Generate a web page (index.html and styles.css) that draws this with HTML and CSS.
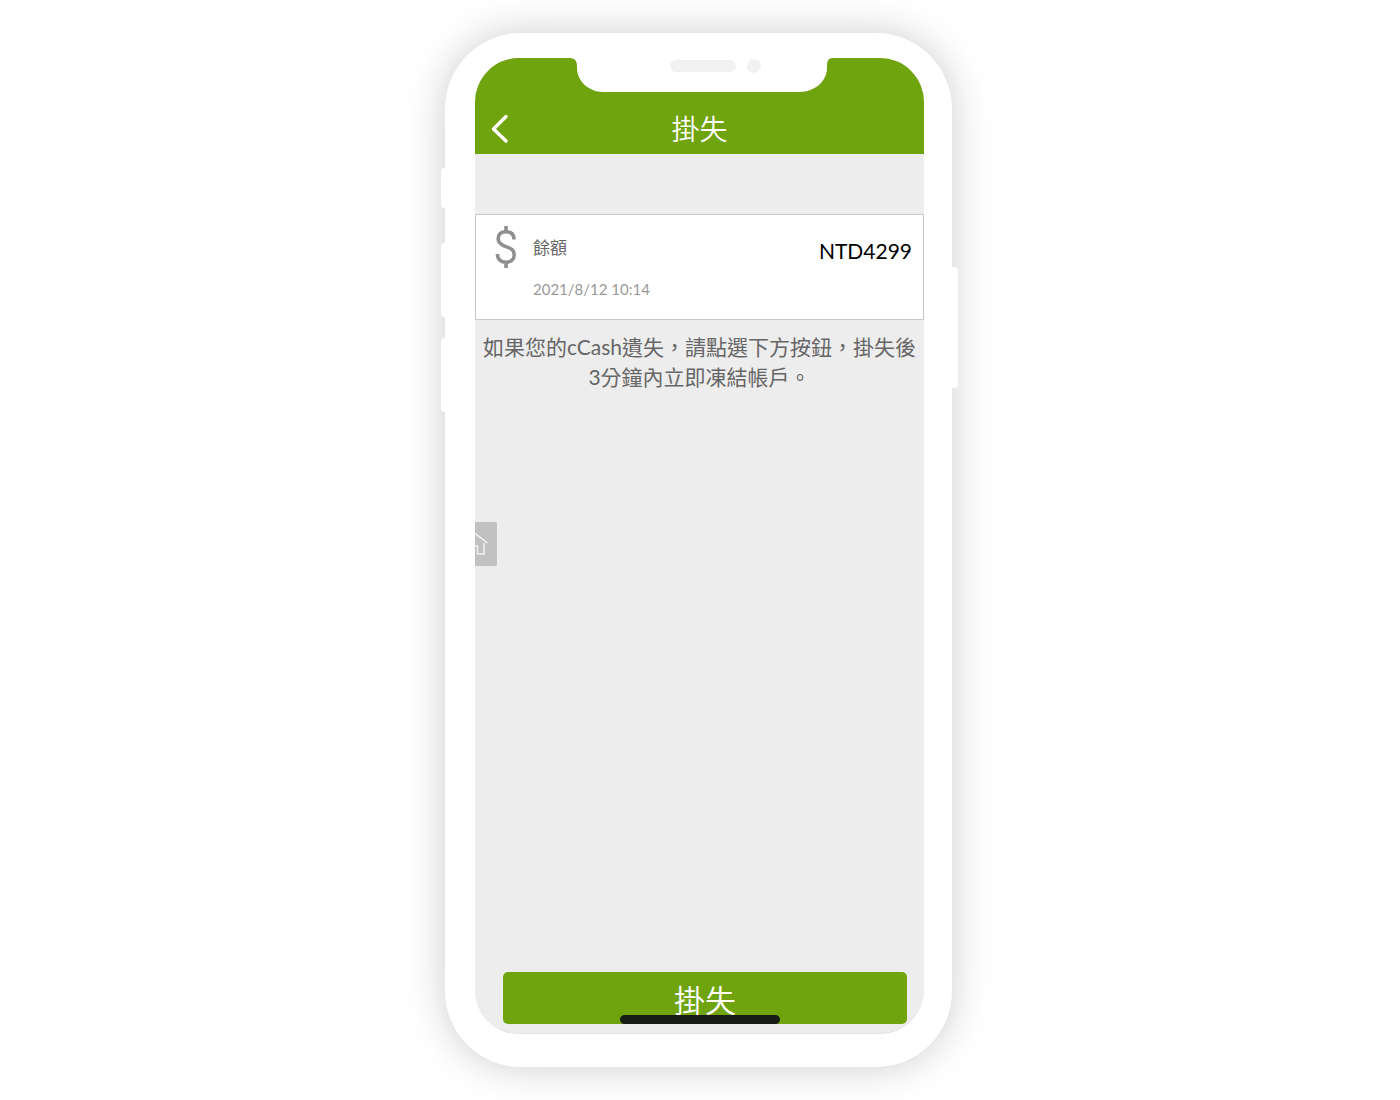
FILE: index.html
```
<!DOCTYPE html>
<html lang="zh-Hant">
<head>
<meta charset="utf-8">
<meta name="viewport" content="width=device-width, initial-scale=1">
<title>掛失</title>
<link rel="stylesheet" href="styles.css">
</head>
<body>
<main class="stage">
  <div class="phone">
    <span class="key key-mute"></span>
    <span class="key key-up"></span>
    <span class="key key-down"></span>
    <span class="key key-power"></span>
    <div class="screen">
      <header class="topbar">
        <button class="back" type="button" aria-label="返回">
          <svg width="18" height="30" viewBox="0 0 18 30" fill="none" stroke="#fff" stroke-width="3.500" stroke-linecap="round" stroke-linejoin="round"><path d="M15 2.500 2.500 15 15 27"/></svg>
        </button>
        <h1 class="title">掛失</h1>
      </header>
      <section class="balance">
        <svg class="dollar" width="22" height="44" viewBox="0 0 22 44" fill="none" stroke="#8f8f8f" stroke-width="3.600"><path d="M11 1v6M11 37v6M19 14.500C19 9.500 16 6.800 11 6.800S3.200 9.300 3.200 14c0 4.200 3 5.900 7.800 7.600 5.500 1.800 8.200 3.500 8.200 8.200 0 4.700-3.200 7.400-8.200 7.400S2.500 34.500 2.500 29"/></svg>
        <div class="details">
          <h2 class="label">餘額</h2>
          <time class="date" datetime="2021-08-12T10:14">2021/8/12 10:14</time>
        </div>
        <strong class="amount">NTD4299</strong>
      </section>
      <p class="notice">如果您的cCash遺失，請點選下方按鈕，掛失後3分鐘內立即凍結帳戶。</p>
      <footer class="actions">
        <button class="submit" type="button">掛失</button>
      </footer>
      <button class="home" type="button" aria-label="首頁">
        <svg width="22" height="44" viewBox="0 0 22 44" fill="none" stroke="#f2f2f2" stroke-width="1.500"><path d="M-13 21 0 11.500 12.500 21M-9 19v13h6v-8h5.500v8H9V21"/></svg>
      </button>
      <span class="indicator"></span>
      <svg class="notch" width="264" height="34" viewBox="0 0 264 34"><path fill="#fff" d="M0 0c5 0 8 2 8 8v2c0 13 12 24 26 24h196c16 0 28-11 28-24V8c0-6 2-8 6-8z"/><rect x="101" y="2" width="66" height="12" rx="6" fill="#f1f1f1"/><circle cx="185" cy="8" r="7" fill="#f1f1f1"/></svg>
    </div>
  </div>
</main>
</body>
</html>
```
FILE: styles.css
```
* {
  box-sizing: border-box;
}

body {
  margin: 0;
  background: #fff;
  font-family: Lato, "Noto Sans CJK TC", sans-serif;
}

button {
  margin: 0;
  padding: 0;
  border: 0;
  font: inherit;
  cursor: pointer;
}

svg {
  display: block;
}

.stage {
  display: flex;
  justify-content: center;
  padding: 33px 15px 33px 12px;
}

.phone {
  position: relative;
  display: flex;
  width: 100%;
  max-width: 507px;
  aspect-ratio: 507 / 1034;
  padding: 25px 28px 33px 30px;
  border-radius: 76px;
  background: #fff;
  box-shadow: 0 0 40px rgba(0, 0, 0, 0.2);
}

/* Side keys of the handset */
.key {
  position: absolute;
  left: -4px;
  width: 8px;
  border-radius: 4px;
  background: #fff;
}

.key-mute {
  top: 135px;
  height: 40px;
}

.key-up {
  top: 210px;
  height: 74px;
}

.key-down {
  top: 305px;
  height: 74px;
}

.key-power {
  top: 234px;
  right: -6px;
  left: auto;
  width: 10px;
  height: 121px;
}

.screen {
  position: relative;
  display: flex;
  flex: 1;
  flex-direction: column;
  min-width: 0;
  overflow: hidden;
  border-bottom: 1px solid #e2e2e2;
  border-radius: 44px;
  background: #ededed;
}

.topbar {
  display: grid;
  grid-template-columns: 1fr auto 1fr;
  align-items: center;
  padding: 50px 16px 5px;
  background: #70a40f;
  color: #fff;
}

.back {
  justify-self: start;
  background: none;
}

.title {
  margin: 0;
  font-family: "Noto Sans CJK TC", sans-serif;
  font-size: 28px;
  font-weight: 350;
  line-height: 41px;
}

.balance {
  display: flex;
  align-items: flex-start;
  margin-top: 60px;
  padding: 10px 11px 17px 19px;
  border: 1px solid #c8c8c8;
  background: #fff;
}

.details {
  flex: 1;
  padding: 10px 0 0 16px;
}

.label {
  margin: 0 0 15px;
  color: #666;
  font-size: 17px;
  font-weight: 400;
  line-height: 26px;
}

.date {
  display: block;
  color: #999;
  font-size: 15px;
  line-height: 26px;
}

.amount {
  padding-top: 12px;
  color: #000;
  font-size: 21px;
  font-weight: 400;
  line-height: 28px;
}

.notice {
  margin: 12px 6px 0;
  color: #666;
  font-size: 21px;
  line-height: 30px;
  text-align: center;
}

.actions {
  display: flex;
  margin-top: auto;
  padding: 20px 17px 9px 28px;
}

.submit {
  flex: 1;
  padding-top: 1px;
  border-radius: 5px;
  background: #70a40f;
  color: #fff;
  font-family: "Noto Sans CJK TC", sans-serif;
  font-size: 31px;
  font-weight: 350;
  line-height: 51px;
}

/* Half-hidden shortcut floating at the screen edge */
.home {
  position: absolute;
  top: 464px;
  left: 0;
  border-radius: 0 2px 2px 0;
  background: #c1c1c1;
}

.indicator {
  position: absolute;
  bottom: 9px;
  left: 50%;
  width: 160px;
  height: 9px;
  margin-left: -80px;
  border-radius: 5px;
  background: #181a18;
}

.notch {
  position: absolute;
  top: 0;
  left: 50%;
  margin-left: -131px;
}
```
